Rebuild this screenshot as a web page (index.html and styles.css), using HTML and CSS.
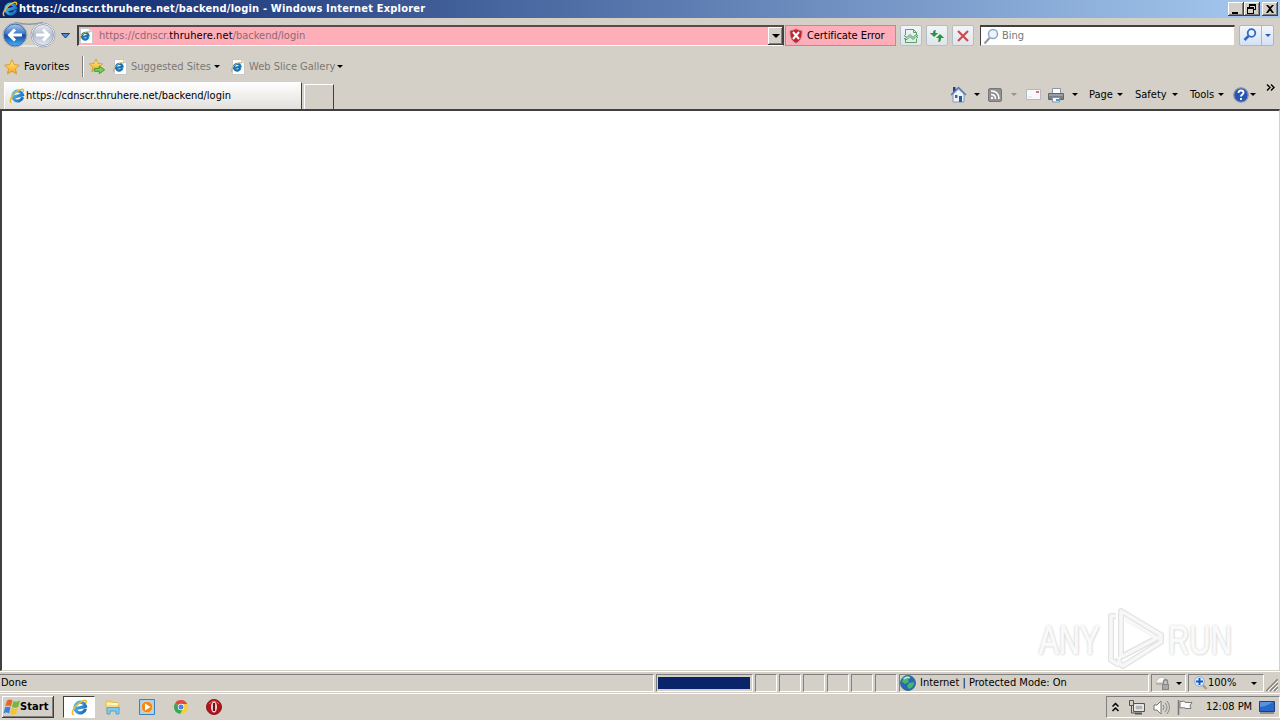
FILE: index.html
```html
<!DOCTYPE html>
<html lang="en">
<head>
    <meta charset="UTF-8">
    <title>https://cdnscr.thruhere.net/backend/login - Windows Internet Explorer</title>
    <link rel="stylesheet" href="styles.css">
</head>
<body>
<svg class="defs" width="0" height="0">
    <defs>
        <linearGradient id="blueBall" x1="0" y1="0" x2="0" y2="1">
            <stop offset="0" stop-color="#a9c8ec"/><stop offset=".45" stop-color="#3c78c8"/><stop offset=".5" stop-color="#14469c"/><stop offset="1" stop-color="#48b4f4"/>
        </linearGradient>
        <linearGradient id="greyBall" x1="0" y1="0" x2="0" y2="1">
            <stop offset="0" stop-color="#e9ebf0"/><stop offset=".5" stop-color="#b4bdce"/><stop offset="1" stop-color="#e3e9f3"/>
        </linearGradient>
        <linearGradient id="gold" x1="0" y1="0" x2="0" y2="1">
            <stop offset="0" stop-color="#fff08a"/><stop offset="1" stop-color="#f5a31a"/>
        </linearGradient>
        <linearGradient id="ieBlue" x1="0" y1="0" x2="1" y2="1">
            <stop offset="0" stop-color="#55c4f4"/><stop offset="1" stop-color="#1463b8"/>
        </linearGradient>
        <symbol id="ie" viewBox="0 0 16 16">
            <path d="M13.200 10.400a5 5 0 1 1 .5-2.200H5" transform="rotate(-14 8 8)" fill="none" stroke="url(#ieBlue)" stroke-width="3"/>
            <path d="M2.500 14.800C-.6 14 2.500 7.500 7.500 3.800 12 .5 15.600 .3 14.300 4" fill="none" stroke="#edb92e" stroke-width="1.500"/>
        </symbol>
        <symbol id="iepage" viewBox="0 0 16 16">
            <path d="M2.500 .5h9l3 3v12h-12z" fill="#fff" stroke="#c6c8cc"/>
            <path d="M11.500 .5v3h3" fill="#e6e9ee" stroke="#c6c8cc"/>
            <path d="M10 10a3.300 3.300 0 1 1 .5-1.600H4.500" transform="rotate(-14 7 8)" fill="none" stroke="#1873b4" stroke-width="2.300"/>
            <path d="M2 13C0 12 3 7 6.500 5S11.500 3 11 5.200" fill="none" stroke="#d4ad3a" stroke-width="1"/>
        </symbol>
        <symbol id="star" viewBox="0 0 16 16">
            <path d="M8 .8l2.200 4.800 5.200.6-3.900 3.500 1.100 5.200L8 12.300l-4.600 2.600 1.100-5.200L.6 6.200l5.200-.6z" fill="url(#gold)" stroke="#e09a2a"/>
        </symbol>
    </defs>
</svg>

<div class="titlebar">
    <svg class="title-icon" width="16" height="16"><use href="#ie"/></svg>
    <span class="title">https://cdnscr.thruhere.net/backend/login - Windows Internet Explorer</span>
    <div class="window-buttons">
        <svg class="win" viewBox="0 0 16 14"><path d="M4 10h6v2H4z"/></svg>
        <svg class="win" viewBox="0 0 16 14"><path d="M5 2h7v6h-2V7h1V4H6v1H5zM3 5h7v7H3zM4 7v4h5V7z" fill-rule="evenodd"/></svg>
        <svg class="win close" viewBox="0 0 16 14"><path d="M4 3h2l2 2 2-2h2L9 6.500 12 11h-2L8 8.500 6 11H4l3-4.500z"/></svg>
    </div>
</div>

<div class="navbar">
    <svg class="travel" width="72" height="28" viewBox="0 0 72 28">
        <path d="M15 1.500Q29 5 43 1.500" fill="none" stroke="#9298a3" stroke-width="1.500"/>
        <path d="M15 24h28v2H15z" fill="#e8e6e2"/>
        <circle cx="15" cy="14" r="12" fill="#fff" stroke="#a4a9b4"/>
        <circle cx="15" cy="14" r="11" fill="url(#blueBall)" stroke="#3d66a5"/>
        <path d="M22 14H10M15 8.500L9.500 14l5.500 5.500" fill="none" stroke="#fff" stroke-width="3"/>
        <circle cx="43" cy="14" r="12" fill="#fff" stroke="#a4a9b4"/>
        <circle cx="43" cy="14" r="10.500" fill="url(#greyBall)" stroke="#9ba5b9"/>
        <path d="M36 14h12M43 8.500l5.500 5.500-5.500 5.500" fill="none" stroke="#fff" stroke-width="3"/>
        <path d="M61.500 12.500h8l-4 4.500z" fill="#4d8ad0" stroke="#1b3f78"/>
    </svg>
    <div class="address">
        <svg width="16" height="16"><use href="#iepage"/></svg>
        <span class="url">https://cdnscr.<b>thruhere.net</b>/backend/login</span>
        <span class="drop"><i class="arrow"></i></span>
    </div>
    <div class="cert">
        <svg width="14" height="16" viewBox="0 0 14 16"><path d="M7 .7C9 2 11 2.400 13 2.400 13.500 8 12 13 7 15.300 2 13 .5 8 1 2.400 3 2.400 5 2 7 .7z" fill="#c3242f" stroke="#b9a6a4"/><path d="M4 4l6 7M10 4l-6 7" stroke="#fff" stroke-width="2"/></svg>
        <span>Certificate Error</span>
    </div>
    <div class="tool compat"><svg width="14" height="14" viewBox="0 0 14 14"><path d="M1.500 6V.5h8l3 3V6M1.500 9.500v4h11v-4M9.500.5v3h3" fill="none" stroke="#5aa067"/><path d="M0 6.500l3 2 3-3 3 3 3-3 2 1.500M0 9.500l3 1 3-3 3 3 3-3 2 1" fill="none" stroke="#379a48"/></svg></div>
    <div class="tool"><svg width="16" height="14" viewBox="0 0 16 14"><path d="M7 1C4.500 1 4 2 4 4H.8l4.400 4 4-4H6.500c0-1.500 0-2 .5-3zM9 13c2.500 0 3-1 3-4h3.200l-4.200-4-4 4h2.600c0 2-.1 3-.6 4z" fill="#2f9440"/></svg></div>
    <div class="tool"><svg width="12" height="12" viewBox="0 0 12 12"><path d="M1 1l10 10M11 1L1 11" stroke="#cf4a50" stroke-width="2.200"/></svg></div>
    <div class="search">
        <svg width="17" height="17" viewBox="0 0 17 17"><circle cx="10" cy="6" r="4.500" fill="#edf5fc" stroke="#8fa8c2" stroke-width="1.500"/><path d="M6.500 10L1.500 15.500" stroke="#8e949c" stroke-width="2"/></svg>
        <span>Bing</span>
    </div>
    <div class="search-go">
        <svg width="21" height="19" viewBox="0 0 21 19"><circle cx="11.500" cy="7" r="3.800" fill="#e8f2ff" stroke="#2f66c0" stroke-width="1.800"/><path d="M8.500 10L4.500 14" stroke="#2f66c0" stroke-width="2.500"/></svg>
        <span class="go-drop"><i class="arrow blue"></i></span>
    </div>
</div>

<div class="favbar">
    <svg width="16" height="16"><use href="#star"/></svg>
    <span class="fav-label">Favorites</span>
    <svg class="addfav" width="24" height="21" viewBox="0 0 24 21"><use href="#star" x="5" y="2" width="15" height="15"/><path d="M11 12.500h5V10l5.500 4-5.500 4v-2.500h-5z" fill="#7ed04e" stroke="#3c9a30"/></svg>
    <svg class="fav-page" width="16" height="16"><use href="#iepage"/></svg>
    <span class="link suggested">Suggested Sites</span><i class="arrow"></i>
    <svg class="fav-page second" width="16" height="16"><use href="#iepage"/></svg>
    <span class="link slice">Web Slice Gallery</span><i class="arrow"></i>
</div>

<div class="tabbar">
    <div class="tab"><svg width="16" height="16"><use href="#ie"/></svg><span>https://cdnscr.thruhere.net/backend/login</span></div>
    <div class="newtab"></div>
    <div class="commands">
        <svg class="home" width="17" height="17" viewBox="0 0 17 17"><path d="M3 8v8h11V8L8.500 3z" fill="#edf3fb" stroke="#8298bd"/><path d="M1 9l7.500-7.500L16 9" fill="none" stroke="#5d79b3" stroke-width="1.500"/><path d="M3 1h2.500v3L3 6z" fill="#26389a"/><path d="M9 10h3v6H9z" fill="#2d5c92"/><path d="M5 9h2.500v3H5z" fill="#51647f"/></svg>
        <i class="arrow"></i>
        <svg class="feed" width="14" height="14" viewBox="0 0 14 14"><rect x=".5" y=".5" width="13" height="13" rx="1.500" fill="#929292" stroke="#777"/><path d="M3 3c5 0 8 3 8 8M3 6.500c3 0 4.500 1.500 4.500 4.500" fill="none" stroke="#fff" stroke-width="1.600"/><circle cx="4" cy="10" r="1.200" fill="#fff"/></svg>
        <i class="arrow dim"></i>
        <svg class="mail" width="15" height="11" viewBox="0 0 15 11"><path d="M.5.5h14v10H.5z" fill="#f8f8fa" stroke="#b5b7c0"/><path d="M10 2h3v2h-3z" fill="#d0767a"/><path d="M2 8h4" stroke="#ddd"/></svg>
        <svg class="print" width="17" height="16" viewBox="0 0 17 16"><path d="M4.500 1.500h8V7h-8z" fill="#fff" stroke="#8b96a4"/><path d="M.5 6.500h15v6H.5z" fill="#7b7e86" stroke="#62666e"/><path d="M1 8h14" stroke="#bbbec6"/><path d="M4.500 10.500h7v4.500h-7z" fill="#f4fbff" stroke="#8795a8"/><path d="M8 12h3v2H8z" fill="#4e9bd0"/></svg>
        <i class="arrow"></i>
        <span class="page">Page</span><i class="arrow"></i>
        <span class="safety">Safety</span><i class="arrow"></i>
        <span class="tools">Tools</span><i class="arrow"></i>
        <svg class="help" width="16" height="16" viewBox="0 0 16 16"><circle cx="8" cy="8" r="7.200" fill="#2854b4" stroke="#8593ae" stroke-width="1.300"/><path d="M5.500 6C5.500 2.500 10.500 2.900 10.500 5.800 10.500 7.500 8 7.500 8 9.500M8 11v2" fill="none" stroke="#fff" stroke-width="1.900"/></svg>
        <i class="arrow"></i>
        <svg class="more" width="9" height="7" viewBox="0 0 9 7"><path d="M1 .5l3 3-3 3M5 .5l3 3-3 3" fill="none" stroke="#000" stroke-width="1.400"/></svg>
    </div>
</div>

<div class="viewport">
    <div class="watermark">
        <span class="wm any">ANY</span>
        <svg width="58" height="64" viewBox="0 0 58 64"><g fill="none" stroke-linejoin="round"><path d="M9 9H4v44l8 5M14 50V4l40 24v7L16 59l-4-3v-5M14 50l38-20" stroke="#e2e2e2" stroke-width="6"/><path d="M9 9H4v44l8 5M14 50V4l40 24v7L16 59l-4-3v-5M14 50l38-20M17 12l34 20" stroke="#f7f7f7" stroke-width="3.500"/></g></svg>
        <span class="wm run">RUN</span>
    </div>
</div>

<div class="statusbar">
    <div class="pane done">Done</div>
    <div class="pane progress"><div class="bar"></div></div>
    <div class="pane small"></div>
    <div class="pane small"></div>
    <div class="pane small"></div>
    <div class="pane small"></div>
    <div class="pane small"></div>
    <div class="pane small"></div>
    <div class="pane zone">
        <svg width="16" height="16" viewBox="0 0 16 16"><circle cx="8" cy="8" r="7.500" fill="#2767b8" stroke="#397087"/><path d="M3 3c3-2 5-2 7-1L8 5l1 2-4 2-3-2zM9 8l5-1c0 4-2 6-5 7l-2-3z" fill="#45b66a"/><path d="M4 4q3-3 6-1" stroke="#bfe9ed" stroke-width="1.500" fill="none"/></svg>
        <span>Internet | Protected Mode: On</span>
    </div>
    <div class="pane lock">
        <svg width="16" height="16" viewBox="0 0 16 16"><path d="M1 8a6 6 0 0 1 9-5v5z" fill="#f7f7f7" stroke="#b9b9b9"/><path d="M1 9h6" stroke="#999"/><path d="M8.500 9V7c0-3 4-3 4 0v2" fill="none" stroke="#888" stroke-width="1.500"/><path d="M7 9h7v6H7z" fill="#858585"/><path d="M8 11h5M8 13h5" stroke="#ccc"/></svg>
        <i class="arrow"></i>
    </div>
    <div class="pane zoom">
        <svg width="14" height="15" viewBox="0 0 14 15"><path d="M8 8l4.500 5" stroke="#bd986e" stroke-width="2.500"/><circle cx="5.500" cy="5.500" r="4.800" fill="#e5f2ff" stroke="#82a9d8"/><path d="M5.500 2v7M2 5.500h7" stroke="#1b59b5" stroke-width="2"/></svg>
        <span>100%</span><i class="arrow"></i>
    </div>
    <svg class="grip" width="12" height="13" viewBox="0 0 12 13"><path d="M0 12L12 0M4 12l8-8M8 12l4-4" stroke="#858178" stroke-width="1.500"/><path d="M2 12L12 2M6 12l6-6M10 12l2-2" stroke="#fff"/></svg>
</div>

<div class="taskbar">
    <div class="start">
        <svg width="17" height="16" viewBox="0 0 17 16"><path d="M4 1.500q3-2 5.500 0L7.800 7.500Q5 5.500 2.200 7.500z" fill="#e7652c"/><path d="M10.500 2q3 1.500 6.500-.5L15.200 8q-3 1.500-6.400 0z" fill="#77b83a"/><path d="M2 8.500q3-1.500 5.500 0L6 14.500q-2.500-2-5.500 0z" fill="#3d83d0"/><path d="M8.500 9q3 1.500 6.500 0l-1.800 6q-3 1.500-6.200 0z" fill="#f5c52c"/></svg>
        <span>Start</span>
    </div>
    <div class="task active"><svg width="17" height="17"><use href="#ie" width="17" height="17"/></svg></div>
    <svg class="quick folder" width="16" height="16" viewBox="0 0 16 16"><path d="M1 2h5l1 1.500h6V7h1.500v4H1z" fill="#f7dc7e" stroke="#dfbd58"/><path d="M2 5h11" stroke="#fff5bd" stroke-width="2"/><path d="M2 15V8.500h12V15h-3v-3H5v3z" fill="#82c9ee" stroke="#55a3cf"/></svg>
    <svg class="quick media" width="16" height="16" viewBox="0 0 16 16"><path d="M.5.500h15v15H.5z" fill="#a9d1f1" stroke="#3a82bd"/><circle cx="8" cy="8" r="5.800" fill="#f18a18" stroke="#fbd08e"/><path d="M6 4.500L11.500 8 6 11.500z" fill="#fff"/></svg>
    <svg class="quick chrome" width="14" height="14" viewBox="0 0 14 14"><path d="M7 7L1 3.400A7 7 0 0 1 13.200 4H7z" fill="#e3493b"/><path d="M7 7L1 3.400A7 7 0 0 0 6.300 14L9.500 8.500z" fill="#35a956"/><path d="M7 4h6.200A7 7 0 0 1 6.300 14L9.500 8z" fill="#fbcd38"/><circle cx="7" cy="7" r="3.200" fill="#fff"/><circle cx="7" cy="7" r="2.500" fill="#4385e8"/></svg>
    <svg class="quick" width="16" height="16" viewBox="0 0 16 16"><circle cx="8" cy="8" r="7.500" fill="#ae151c" stroke="#8f1418"/><path d="M3 5q5-6 10 0" fill="none" stroke="#dc6666"/><ellipse cx="8" cy="8" rx="3" ry="5.500" fill="#f0dfdd"/><path d="M8 4v8" stroke="#721014" stroke-width="2.200"/></svg>
    <div class="tray">
        <svg width="9" height="11" viewBox="0 0 9 11"><path d="M1.500 4.500l3-3 3 3M1.500 9l3-3 3 3" fill="none" stroke="#000" stroke-width="1.500"/></svg>
        <svg class="net" width="16" height="15" viewBox="0 0 16 15"><path d="M4.500 3.500h11v8h-11z" fill="#d0d0d0" stroke="#555"/><path d="M6 5h8v5H6z" fill="#b5b5b5" stroke="#fff"/><path d="M6 13.500h7" stroke="#555" stroke-width="2"/><path d="M.5.500h4v5h-4zM2.500 5v8h4" fill="none" stroke="#555"/></svg>
        <svg class="sound" width="17" height="15" viewBox="0 0 17 15"><path d="M1 5h3l4-4v13l-4-4H1z" fill="#fff" stroke="#777"/><path d="M10 5q2 2.500 0 5M12 3q4 4.500 0 9M14 1q5 6.500 0 13" fill="none" stroke="#888"/></svg>
        <svg class="flag" width="17" height="15" viewBox="0 0 17 15"><path d="M1.500 0v15" stroke="#777" stroke-width="1.500"/><path d="M3 1.500q4-1 6 1h6l-2 3 1 3H9q-2-1.500-6-.5z" fill="#fafafa" stroke="#777"/></svg>
        <span class="clock">12:08 PM</span>
        <svg class="desktop" width="16" height="13" viewBox="0 0 16 13"><path d="M.5.500h15v10H.5z" fill="#2868c8" stroke="#194282"/><path d="M1 6Q8 5 14 1H1z" fill="#5793de"/><path d="M1 12h14" stroke="#454d58"/></svg>
    </div>
</div>
</body>
</html>
```

FILE: styles.css
```css
* {
  box-sizing: border-box;
  margin: 0;
  padding: 0;
}

body {
  width: 1280px;
  height: 720px;
  overflow: hidden;
  display: flex;
  flex-direction: column;
  background: #d4d0c8;
  color: #000;
  font: 11px/14px "DejaVu Sans Condensed", "DejaVu Sans", sans-serif;
  font-stretch: condensed;
  white-space: nowrap;
}

.defs {
  position: absolute;
}

svg,
span,
.arrow {
  flex-shrink: 0;
}

.arrow {
  width: 0;
  height: 0;
  border: 3px solid transparent;
  border-top-color: #000;
  border-bottom: 0;
}

.arrow.dim {
  border-top-color: #96918a;
}

.arrow.blue {
  border-top-color: #2860b0;
}

/* Title bar */
.titlebar {
  height: 18px;
  display: flex;
  align-items: center;
  padding: 0 2px;
  background: linear-gradient(90deg, #0a246a, #a6caf0);
}

.title {
  margin-left: 1px;
  width: 407px;
  color: #fff;
  font-weight: bold;
  letter-spacing: 0.19px;
}

.window-buttons {
  display: flex;
  margin-left: auto;
}

.win {
  width: 16px;
  height: 14px;
  background: #d4d0c8;
  box-shadow: inset -1px -1px #404040, inset 1px 1px #fff, inset -2px -2px #808080;
}

.win.close {
  margin-left: 2px;
}

/* Back / forward, address and search */
.navbar {
  height: 35px;
  display: flex;
  align-items: flex-start;
  padding-top: 7px;
}

.travel {
  margin-top: -4px;
}

.address {
  width: 707px;
  height: 21px;
  margin-left: 5px;
  display: flex;
  align-items: center;
  background: #ffadb9;
  border: 2px solid #404040;
  border-top-color: #5a4a4c;
  border-right-width: 1px;
  border-bottom: 1px solid #fff;
  color: #8b6b70;
}

.address svg {
  margin-left: -1px;
}

.url {
  margin-left: 5px;
}

.url b {
  font-weight: normal;
  color: #000;
  letter-spacing: 0.1px;
}

.drop {
  width: 15px;
  height: 18px;
  margin-left: auto;
  display: flex;
  align-items: center;
  justify-content: center;
  background: #d4d0c8;
  box-shadow: inset -1px -1px #404040, inset 1px 1px #fff, inset -2px -2px #808080;
}

.drop .arrow {
  border-width: 4px 4px 0;
}

.cert {
  width: 111px;
  height: 21px;
  margin-left: 1px;
  display: flex;
  align-items: center;
  padding-left: 3px;
  background: #ffadb9;
  border: 1px solid #9a94b8;
}

.cert span {
  margin-left: 4px;
  letter-spacing: -0.07px;
}

.tool {
  width: 22px;
  height: 21px;
  margin-left: 4px;
  display: flex;
  align-items: center;
  justify-content: center;
  background: linear-gradient(#f2f5f8, #dfe5ea);
  border: 1px solid #b4bec8;
  border-radius: 2px;
}

.search {
  width: 255px;
  height: 21px;
  margin-left: 6px;
  display: flex;
  align-items: center;
  padding-left: 2px;
  background: #fff;
  border: 1px solid #d4d0c8;
  border-top: 2px solid #404040;
  border-left: 1px solid #404040;
  color: #777;
}

.search span {
  margin-left: 2px;
}

.search-go {
  width: 35px;
  height: 21px;
  margin-left: 4px;
  display: flex;
  background: linear-gradient(#f2f6fc, #d5e1f4);
  border: 1px solid #a9b8d0;
  border-radius: 2px;
}

.go-drop {
  flex: 1;
  display: flex;
  align-items: center;
  justify-content: center;
  border-left: 1px solid #a9b8d0;
}

/* Favorites */
.favbar {
  height: 27px;
  display: flex;
  align-items: center;
  padding-left: 4px;
}

.fav-label {
  width: 59px;
  margin-left: 4px;
  letter-spacing: 0.1px;
}

.addfav {
  border-left: 1px solid #fff;
  box-shadow: -1px 0 #808080;
}

.fav-page {
  margin-left: 5px;
}

.fav-page.second {
  margin-left: 10px;
}

.link {
  margin-left: 3px;
  color: #7b7873;
}

.suggested {
  width: 83px;
}

.slice {
  width: 88px;
}

/* Tabs and command bar */
.tabbar {
  height: 29px;
  display: flex;
  align-items: flex-end;
  padding-left: 4px;
}

.tab {
  width: 298px;
  height: 27px;
  display: flex;
  align-items: center;
  padding-left: 4px;
  background: linear-gradient(#fefefe, #e2e0dc);
  border: 1px solid #fff;
  border-right: 1px solid #404040;
  border-bottom: 0;
}

.tab span {
  margin-left: 1px;
}

.newtab {
  width: 30px;
  height: 25px;
  margin-left: 2px;
  border: 1px solid #fff;
  border-right: 1px solid #404040;
  border-bottom: 0;
}

.commands {
  width: 330px;
  height: 29px;
  margin-left: auto;
  display: flex;
  align-items: center;
}

.home {
  margin-right: 7px;
}

.feed {
  margin: 0 9px 0 8px;
}

.mail {
  margin: 0 7px 0 9px;
}

.print {
  margin-right: 7px;
}

.page {
  width: 28px;
  margin-left: 11px;
}

.safety {
  width: 37px;
  margin-left: 12px;
}

.tools {
  width: 28px;
  margin-left: 12px;
}

.help {
  margin: 0 1px 0 9px;
}

.more {
  align-self: flex-start;
  margin: 4px 0 0 10px;
}

/* Page area */
.viewport {
  height: 562px;
  display: flex;
  justify-content: flex-end;
  align-items: flex-end;
  background: #fff;
  border: 1px solid #d4d0c8;
  border-top: 2px solid #404040;
  border-left: 2px solid #404040;
}

.watermark {
  width: 242px;
  height: 62px;
  display: flex;
  align-items: center;
}

.wm {
  padding-top: 2px;
  font: 41px/64px "Liberation Sans", sans-serif;
  color: #fafafa;
  -webkit-text-stroke: 1px #fafafa;
  text-shadow: 0 0 3px #b8b8b8, 1px 1px 2px #ddd;
  transform: scaleX(.72);
  transform-origin: left;
}

.any {
  width: 68px;
  margin-left: 2px;
}

.run {
  margin-left: 3px;
}

/* Status bar */
.statusbar {
  height: 23px;
  display: flex;
  padding: 2px 0;
  border-top: 1px solid #fff;
  border-bottom: 1px solid #fff;
}

.pane {
  flex-shrink: 0;
  height: 18px;
  display: flex;
  align-items: center;
  margin-right: 2px;
  border: 1px solid #808080;
  border-right-color: #fff;
  border-bottom-color: #fff;
}

.done {
  width: 654px;
  border-left: 0;
  padding-left: 1px;
}

.progress {
  width: 97px;
  padding: 1px;
}

.bar {
  width: 92px;
  height: 12px;
  background: #0a246a;
}

.small {
  width: 22px;
}

.zone {
  width: 250px;
}

.zone span {
  margin-left: 4px;
}

.lock {
  width: 35px;
  padding-left: 3px;
}

.lock .arrow {
  margin-left: 5px;
}

.zoom {
  width: 76px;
  padding-left: 5px;
}

.zoom span {
  width: 43px;
  margin-left: 0;
}

.grip {
  margin-top: 5px;
}

/* Taskbar */
.taskbar {
  height: 26px;
  display: flex;
  align-items: center;
  padding-left: 2px;
}

.start {
  width: 52px;
  height: 22px;
  display: flex;
  align-items: center;
  padding-left: 1px;
  font-weight: bold;
  box-shadow: inset -1px -1px #404040, inset 1px 1px #fff, inset -2px -2px #808080;
}

.start span {
  letter-spacing: 0.1px;
}

.task {
  width: 32px;
  height: 22px;
  margin-left: 9px;
  display: flex;
  align-items: center;
  justify-content: center;
  background: #fff;
  border: 1px solid #fff;
  border-top-color: #404040;
  border-left-color: #404040;
}

.quick {
  margin-left: 18px;
}

.folder {
  margin-left: 10px;
}

.chrome {
  margin-left: 19px;
}

.tray {
  width: 174px;
  height: 22px;
  margin-left: auto;
  display: flex;
  align-items: center;
  padding-left: 4px;
  border: 1px solid #808080;
  border-right-color: #fff;
  border-bottom-color: #fff;
}

.net {
  margin-left: 9px;
}

.sound {
  margin-left: 8px;
}

.flag {
  margin-left: 7px;
}

.clock {
  width: 45px;
  margin-left: 12px;
}

.desktop {
  margin-left: 8px;
}
```
